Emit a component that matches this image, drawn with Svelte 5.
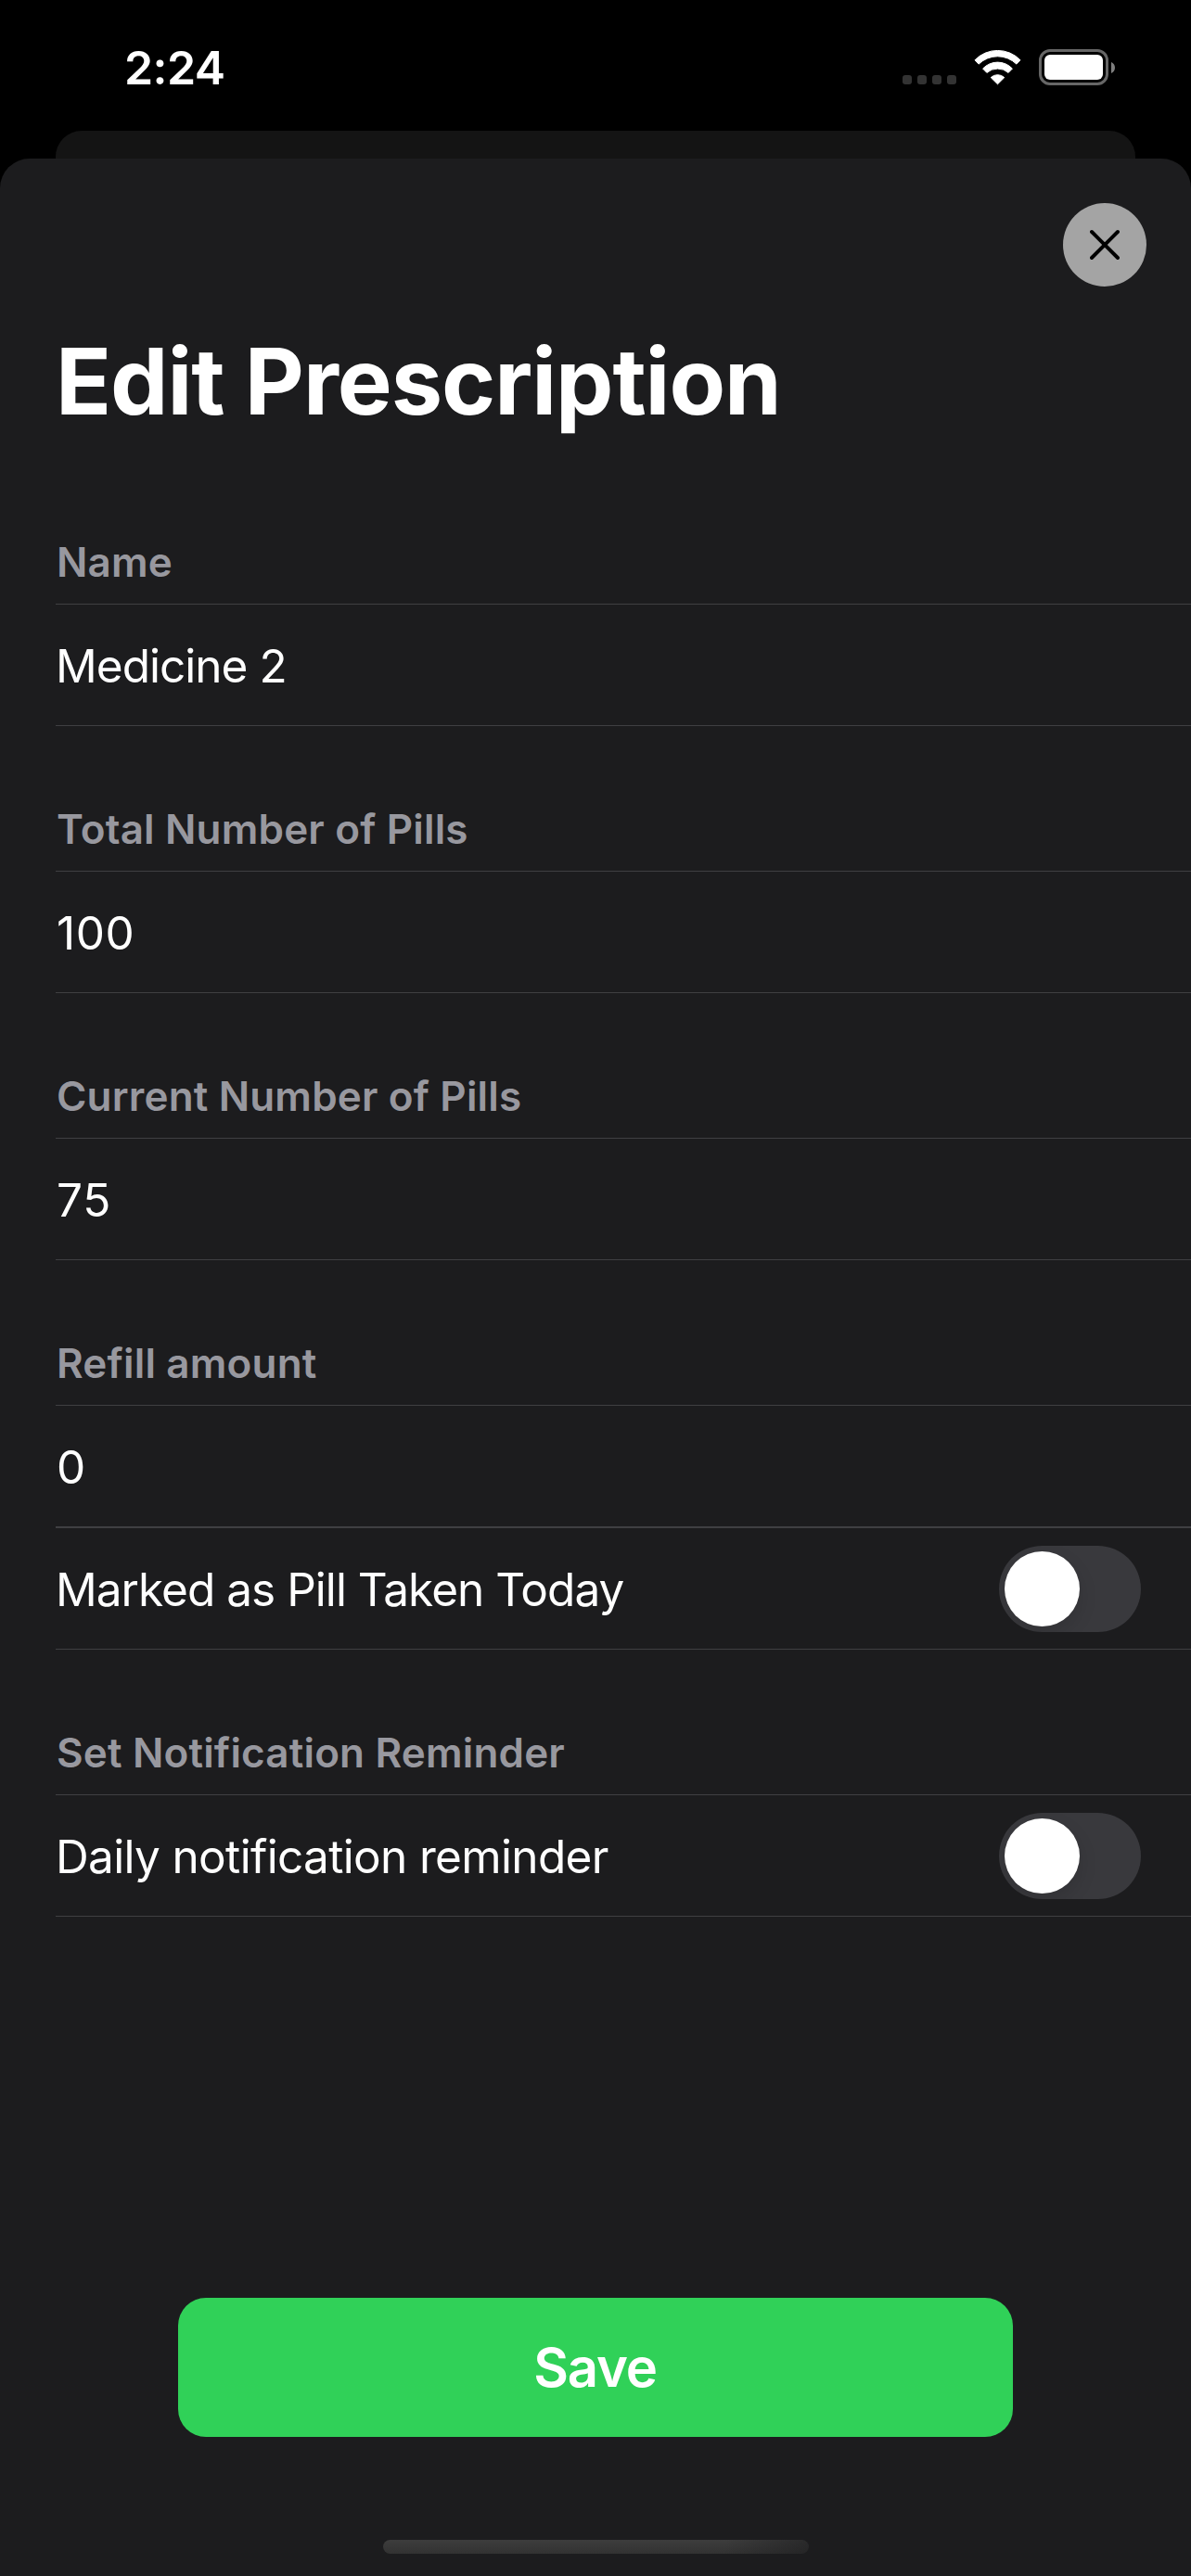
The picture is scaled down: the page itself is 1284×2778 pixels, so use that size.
<script>
  const fields = [
    { label: 'Name', value: 'Medicine 2' },
    { label: 'Total Number of Pills', value: '100', numeric: true },
    { label: 'Current Number of Pills', value: '75', numeric: true },
    { label: 'Refill amount', value: '0', numeric: true }
  ];

  let takenToday = $state(false);
  let dailyReminder = $state(false);
</script>

{#snippet toggle(on, label, flip)}
  <button class="switch" class:on role="switch" aria-checked={on} aria-label={label} onclick={flip}>
    <span class="knob"></span>
  </button>
{/snippet}

<div class="screen">
  <div class="status">
    <span class="time">2:24</span>
    <div class="indicators">
      <div class="signal"><i></i><i></i><i></i><i></i></div>
      <svg class="wifi" width="51" height="38" viewBox="0 0 51 38" fill="#fff" stroke="#fff" stroke-width="1" stroke-linejoin="round">
        <path d="M1 10.8A34.1 34.1 0 0 1 50 10.8L45.8 15.1A29 29 0 0 0 5.2 15.1Z" />
        <path d="M9.6 20A21.8 21.8 0 0 1 41.4 20L37.1 24.4A17.7 17.7 0 0 0 13.9 24.4Z" />
        <path d="M18.2 29.6A10.6 10.6 0 0 1 32.8 29.6L25.5 36.8Z" />
      </svg>
      <div class="battery">
        <div class="shell"><div class="charge"></div></div>
        <svg width="4" height="12" viewBox="0 0 4 12"><path d="M0 0C2.4 .8 4 3.2 4 6S2.4 11.2 0 12Z" fill="#7f7f7f" /></svg>
      </div>
    </div>
  </div>

  <div class="back-card"></div>

  <main class="sheet">
    <div class="bar">
      <button class="close" aria-label="Close">
        <svg width="34" height="34" viewBox="0 0 34 34" fill="none" stroke="#000" stroke-width="3.9" stroke-linecap="round">
          <path d="M3 3L31 31M31 3L3 31" />
        </svg>
      </button>
    </div>
    <h1>Edit Prescription</h1>

    <div class="form">
      {#each fields as f}
        <section>
          <h2>{f.label}</h2>
          <div class="row"><span class="text" class:numeric={f.numeric} class:tight={!f.numeric}>{f.value}</span></div>
        </section>
      {/each}
      <section>
        <div class="row">
          <span class="text tight">Marked as Pill Taken Today</span>
          {@render toggle(takenToday, 'Marked as Pill Taken Today', () => (takenToday = !takenToday))}
        </div>
      </section>
      <section>
        <h2>Set Notification Reminder</h2>
        <div class="row">
          <span class="text">Daily notification reminder</span>
          {@render toggle(dailyReminder, 'Daily notification reminder', () => (dailyReminder = !dailyReminder))}
        </div>
      </section>
    </div>

    <button class="save">Save</button>
    <div class="home"></div>
  </main>
</div>

<style>
  :global(body) {
    background: #000;
  }
  .screen {
    width: 1284px;
    height: 2778px;
    display: flex;
    flex-direction: column;
    overflow: hidden;
    background: #000;
    color: #fff;
    font-family: Inter, 'Liberation Sans', sans-serif;
  }
  button {
    border: 0;
    padding: 0;
    font: inherit;
    color: inherit;
  }

  .status {
    flex: none;
    box-sizing: border-box;
    height: 141px;
    padding: 43px 82px 0 134px;
    display: flex;
    justify-content: space-between;
    align-items: flex-start;
  }
  .time {
    font-size: 50px;
    line-height: 60px;
    font-weight: 600;
    letter-spacing: -0.6px;
  }
  .indicators {
    display: flex;
    align-items: flex-end;
    height: 49px;
  }
  .signal {
    display: flex;
    gap: 6px;
    margin: 0 19px 1px 0;
  }
  .signal i {
    width: 10px;
    height: 10px;
    border-radius: 3px;
    background: #333;
  }
  .wifi {
    display: block;
    margin-bottom: 0.5px;
  }
  .battery {
    display: flex;
    align-items: center;
    gap: 3px;
    margin-left: 19px;
  }
  .shell {
    box-sizing: border-box;
    width: 75px;
    height: 39px;
    padding: 3px;
    border: 3px solid #666;
    border-radius: 12px;
  }
  .charge {
    height: 27px;
    border-radius: 6px;
    background: #fff;
  }

  .back-card {
    flex: none;
    height: 30px;
    margin: 0 60px;
    border-radius: 28px 28px 0 0;
    background: #141414;
  }
  .sheet {
    flex: 1;
    box-sizing: border-box;
    display: flex;
    flex-direction: column;
    padding: 48px 0 24px;
    border-radius: 32px 32px 0 0;
    background: #1c1c1e;
  }
  .bar {
    display: flex;
    justify-content: flex-end;
    padding-right: 48px;
  }
  .close {
    display: grid;
    place-items: center;
    width: 90px;
    height: 90px;
    border-radius: 50%;
    background: #a4a4a4;
  }
  h1 {
    margin: 42px 0 0 60px;
    font-size: 99px;
    line-height: 120px;
    font-weight: 700;
    letter-spacing: -1.05px;
  }

  .form {
    margin: 24px 0 0 60px;
  }
  h2 {
    box-sizing: border-box;
    display: flex;
    align-items: flex-end;
    height: 156px;
    margin: 0;
    padding: 0 0 18px 1px;
    font-size: 44px;
    line-height: 54px;
    font-weight: 600;
    letter-spacing: 0.17px;
    color: #98989f;
  }
  .row {
    display: flex;
    align-items: center;
    justify-content: space-between;
    height: 130px;
    padding-right: 54px;
    border-top: 1px solid #3f3f42;
    border-bottom: 1px solid #3f3f42;
  }
  .text {
    padding-top: 2px;
    font-size: 49.5px;
    line-height: 60px;
    letter-spacing: -0.66px;
  }
  .numeric {
    padding-left: 1px;
    letter-spacing: 0.6px;
  }
  .tight {
    letter-spacing: -0.97px;
  }
  .switch {
    box-sizing: border-box;
    display: flex;
    width: 153px;
    height: 93px;
    padding: 6px;
    overflow: hidden;
    border-radius: 47px;
    background: #39393d;
  }
  .switch.on {
    justify-content: flex-end;
    background: #30d158;
  }
  .knob {
    width: 81px;
    height: 81px;
    border-radius: 50%;
    background: #fff;
    box-shadow: 0 8px 20px rgba(0, 0, 0, 0.12);
  }

  .save {
    align-self: center;
    width: 900px;
    height: 150px;
    padding: 0 1px 1px 0;
    margin-top: auto;
    border-radius: 30px;
    background: #30d158;
    font-size: 58px;
    line-height: 70px;
    font-weight: 600;
    letter-spacing: -1.2px;
  }
  .home {
    align-self: center;
    flex: none;
    width: 459px;
    height: 15px;
    margin-top: 111px;
    border-radius: 8px;
    background:
      linear-gradient(100deg, transparent 80%, rgba(28, 28, 30, 0.6) 100%),
      linear-gradient(#3d3d3d, #323232);
  }
</style>
